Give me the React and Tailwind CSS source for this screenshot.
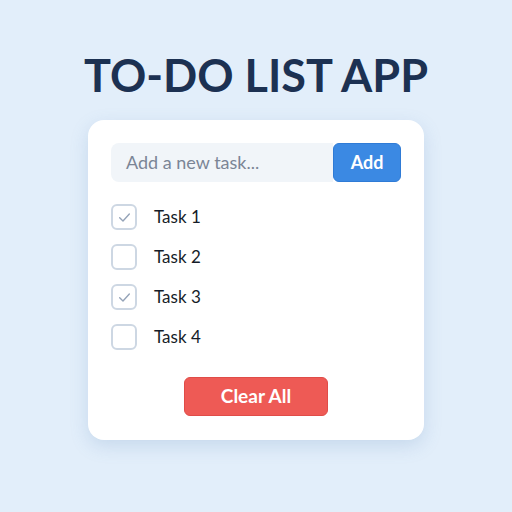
import React from "react";

function Check() {
  return (
    <svg width="15" height="15" viewBox="0 0 14 14" fill="none">
      <path d="M2.5 7.2 L5.6 10.2 L11.5 3.8" stroke="#94a3b8" strokeWidth="1.3" strokeLinecap="round" strokeLinejoin="round" />
    </svg>
  );
}

const tasks = [
  { label: "Task 1", done: true },
  { label: "Task 2", done: false },
  { label: "Task 3", done: true },
  { label: "Task 4", done: false },
];

export default function App() {
  return (
    <div className="w-[512px] h-[512px] bg-[#e2eefa] flex flex-col items-center" style={{ fontFamily: "Lato, 'Noto Sans', sans-serif" }}>
      <h1 className="mt-[50px] h-[50px] flex items-center text-[45px] font-bold text-[#1c3152] leading-none">TO-DO LIST APP</h1>
      <div className="mt-[20px] w-[336px] h-[320px] bg-white rounded-[16px] shadow-[0_6px_18px_rgba(100,140,190,0.22)] px-[23px] pt-[23px] flex flex-col">
        <div className="flex h-[39px]">
          <div className="flex-1 bg-[#f1f5f9] rounded-l-[8px] flex items-center pl-[15px] text-[18px] text-[#7b8596]">Add a new task...</div>
          <button className="w-[68px] bg-[#3b89e3] border border-[#2f7bd6] rounded-[6px] text-white text-[18px] font-bold">Add</button>
        </div>
        <div className="mt-[15px] flex flex-col">
          {tasks.map((t) => (
            <div key={t.label} className="h-[40px] flex items-center">
              <div className="w-[26px] h-[26px] rounded-[6px] border-2 border-[#cdd7e3] flex items-center justify-center">
                {t.done && <Check />}
              </div>
              <span className="ml-[17px] text-[17px] text-[#151c28]">{t.label}</span>
            </div>
          ))}
        </div>
        <div className="mt-[20px] flex justify-center">
          <button className="w-[144px] h-[39px] bg-[#ee5a55] border border-[#e04c48] rounded-[6px] text-white text-[19px] font-bold">Clear All</button>
        </div>
      </div>
    </div>
  );
}
